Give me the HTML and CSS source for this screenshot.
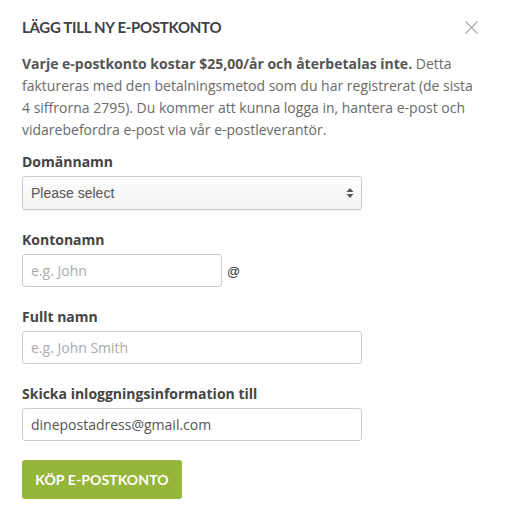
FILE: index.html
```html
<!DOCTYPE html>
<html lang="sv">
<head>
<meta charset="utf-8">
<link rel="stylesheet" href="styles.css">
</head>
<body>
<div class="modal">
  <div class="header">
    <h2 class="title">LÄGG TILL NY E-POSTKONTO</h2>
    <span class="close" aria-label="Stäng">
      <svg width="13" height="13" viewBox="0 0 13 13"><path d="M0.5 0.5 L12.5 12.5 M12.5 0.5 L0.5 12.5" stroke="#a3a8ad" stroke-width="1.1" fill="none"/></svg>
    </span>
  </div>
  <p class="intro"><strong>Varje e-postkonto kostar $25,00/år och återbetalas inte.</strong> Detta faktureras med den betalningsmetod som du har registrerat (de sista 4 siffrorna 2795). Du kommer att kunna logga in, hantera e-post och vidarebefordra e-post via vår e-postleverantör.</p>
  <div class="field">
    <label class="label">Domännamn</label>
    <div class="select">
      <span>Please select</span>
      <svg width="8" height="12" viewBox="0 0 8 12"><path d="M4 1 L7.5 5 L0.5 5 Z M4 11 L7.5 7 L0.5 7 Z" fill="#555"/></svg>
    </div>
  </div>
  <div class="field">
    <label class="label">Kontonamn</label>
    <div class="row">
      <div class="input short placeholder">e.g. John</div>
      <span class="at">@</span>
    </div>
  </div>
  <div class="field">
    <label class="label">Fullt namn</label>
    <div class="input placeholder">e.g. John Smith</div>
  </div>
  <div class="field">
    <label class="label">Skicka inloggningsinformation till</label>
    <div class="input">dinepostadress@gmail.com</div>
  </div>
  <button class="btn">KÖP E-POSTKONTO</button>
</div>
</body>
</html>
```
FILE: styles.css
```css
* { box-sizing: border-box; }
body {
  margin: 0;
  background: #fff;
  font-family: "Open Sans", "Liberation Sans", sans-serif;
  color: #666;
}
.modal {
  padding: 16px 22px 20px 22px;
}
.header {
  display: flex;
  justify-content: space-between;
  align-items: center;
}
.title {
  margin: 0;
  font-family: Lato, "Open Sans", sans-serif;
  font-weight: 700;
  font-size: 15px;
  line-height: 22px;
  color: #3f4145;
  letter-spacing: -0.3px;
}
.close {
  display: flex;
  margin-right: 5px;
  margin-top: 1px;
}
.intro {
  margin: 15px 0 11px 0;
  font-size: 14px;
  line-height: 22px;
  color: #6a6a6a;
}
.intro strong {
  color: #555;
  font-weight: 700;
}
.field {
  margin-bottom: 20px;
}
.label {
  display: block;
  font-size: 14px;
  font-weight: 700;
  line-height: 20px;
  color: #444;
  margin-bottom: 4px;
}
.select {
  width: 340px;
  height: 34px;
  border: 1px solid #ccc;
  border-radius: 3px;
  background: linear-gradient(#fdfdfd, #f4f4f4);
  box-shadow: 0 1px 1px rgba(0,0,0,0.06);
  display: flex;
  align-items: center;
  justify-content: space-between;
  padding: 0 7px 0 8px;
  font-family: "Liberation Sans", Arial, sans-serif;
  font-size: 14px;
  color: #555;
}
.row {
  display: flex;
  align-items: center;
  gap: 5px;
}
.input {
  width: 340px;
  height: 33px;
  border: 1px solid #ccc;
  border-radius: 3px;
  display: flex;
  align-items: center;
  padding: 0 8px;
  font-size: 14px;
  color: #555;
}
.input.short { width: 200px; }
.placeholder { color: #aaa; }
.at {
  font-family: "Liberation Sans", Arial, sans-serif;
  font-size: 13px;
  color: #333;
  margin-top: 2px;
}
.btn {
  margin-top: -1px;
  width: 160px;
  height: 39px;
  border: none;
  border-radius: 3px;
  background: #95b63a;
  color: #fff;
  font-family: Lato, "Open Sans", sans-serif;
  font-weight: 700;
  font-size: 14px;
  letter-spacing: 0.1px;
  padding: 0;
}
```
